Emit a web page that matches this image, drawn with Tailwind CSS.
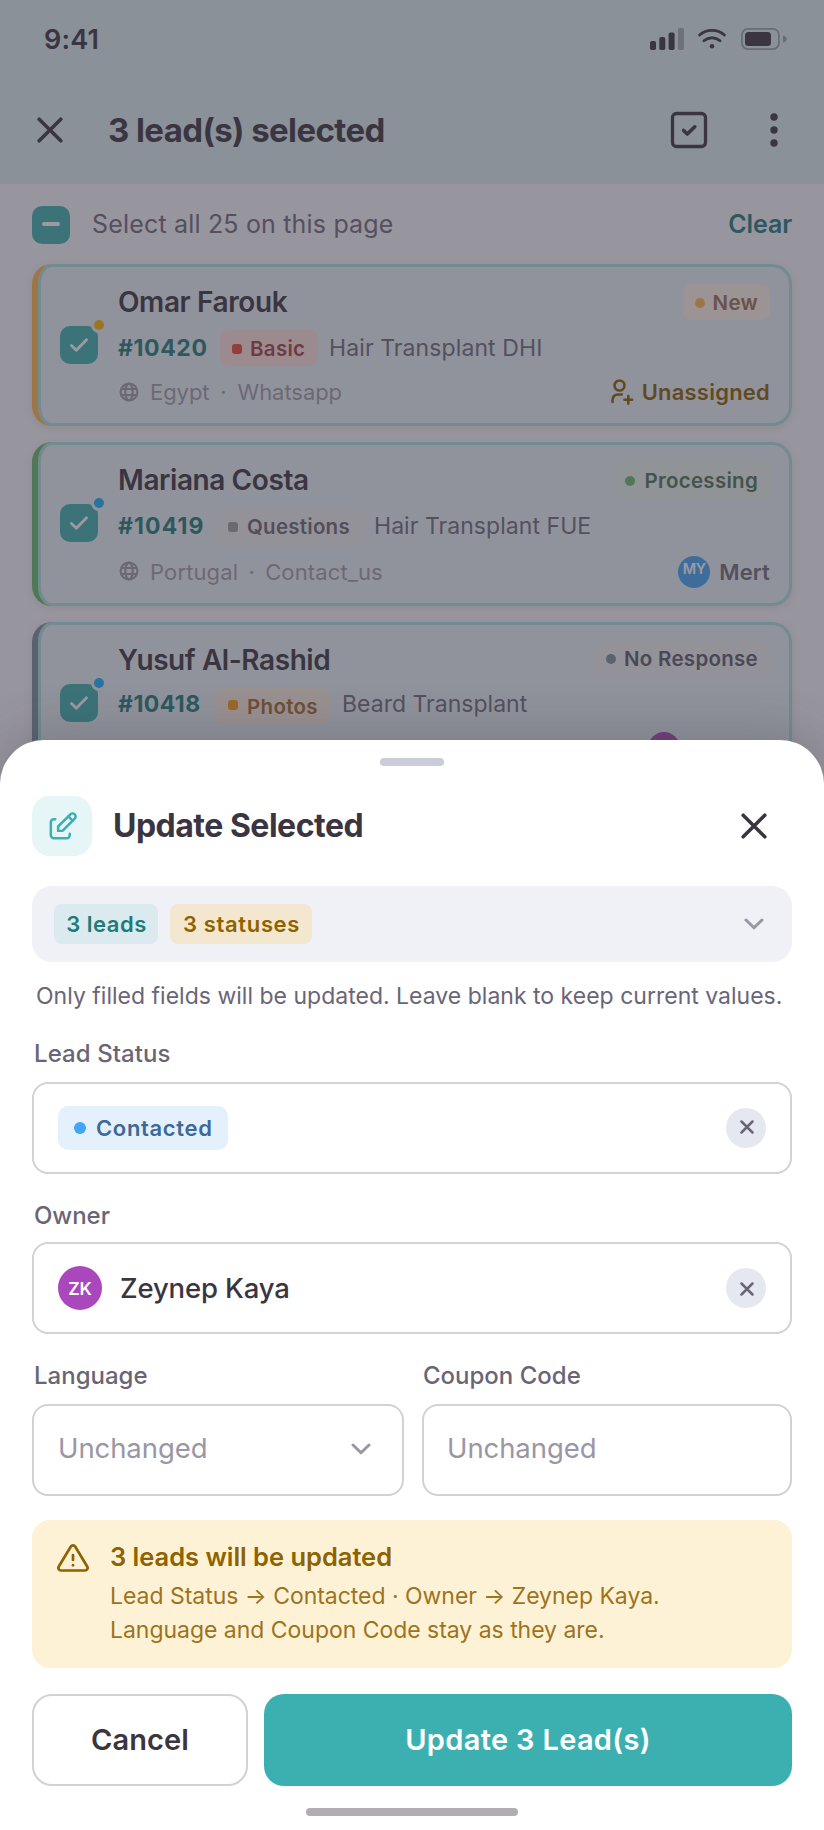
<!DOCTYPE html>
<html lang="en">
<head>
<meta charset="utf-8">
<title>Update Selected Leads</title>
<script src="https://cdn.jsdelivr.net/npm/@tailwindcss/browser@4"></script>
</head>
<body class="bg-[#f5f4fb]">
<svg class="hidden">
  <symbol id="x" viewBox="0 0 26 26"><path d="M2.2 2.2l21.600 21.600M23.800 2.200l-21.600 21.600" fill="none" stroke="currentColor" stroke-width="3.600" stroke-linecap="round"/></symbol>
  <symbol id="x-small" viewBox="0 0 14 14"><path d="M1.500 1.500l11 11M12.500 1.500l-11 11" fill="none" stroke="currentColor" stroke-width="2.500" stroke-linecap="round"/></symbol>
  <symbol id="check" viewBox="0 0 18 14"><path d="M1.500 7.600l4.800 4.700L16.500 1.700" fill="none" stroke="currentColor" stroke-width="2.800" stroke-linecap="round" stroke-linejoin="round"/></symbol>
  <symbol id="chevron" viewBox="0 0 20 12"><path d="M2 2l8 7.800L18 2" fill="none" stroke="currentColor" stroke-width="3" stroke-linecap="round" stroke-linejoin="round"/></symbol>
  <symbol id="globe" viewBox="0 0 20 20"><g fill="none" stroke="currentColor" stroke-width="2.200"><circle cx="10" cy="10" r="8.400"/><ellipse cx="10" cy="10" rx="3.700" ry="8.400"/><path d="M2.200 7h15.600M2.200 13h15.600"/></g></symbol>
</svg>
<div class="relative flex h-[1830px] w-[824px] flex-col overflow-hidden font-['Inter',sans-serif] text-[#3a3541]">

  <!-- App bar -->
  <header class="flex h-[184px] flex-col bg-[#dbedef]">
    <div class="flex h-[78px] items-center justify-between pr-[36px] pl-[44px]">
      <span class="pt-[1px] text-[27px] leading-[30px] font-semibold tracking-[0.15px]">9:41</span>
      <div class="flex items-center gap-[14px]">
        <svg class="h-[22px] w-[34px]" viewBox="0 0 34 22" fill="#3a3541"><rect x="0" y="13" width="6" height="9" rx="1.8"/><rect x="9.3" y="9" width="6" height="13" rx="1.8"/><rect x="18.6" y="4.5" width="6" height="17.5" rx="1.8"/><rect x="28" y="0" width="6" height="22" rx="1.8" opacity=".35"/></svg>
        <svg class="h-[22px] w-[28px]" viewBox="0 0 28 22" fill="none" stroke="#3a3541" stroke-width="2.8" stroke-linecap="round"><path d="M1.6 7C8.4.7 19.6.7 26.4 7M6 12.8c4.5-4 11.5-4 16 0"/><circle cx="14" cy="18.3" r="2.3" fill="#3a3541" stroke="none"/></svg>
        <svg class="ml-[1px] h-[22px] w-[47px]" viewBox="0 0 47 22"><rect x=".9" y=".9" width="37" height="20.2" rx="6" fill="none" stroke="#3a3541" stroke-opacity=".4" stroke-width="1.8"/><rect x="4" y="4" width="26" height="14" rx="3.5" fill="#3a3541"/><path d="M42 7.5c5 1 5 6 0 7z" fill="#3a3541" fill-opacity=".4"/></svg>
      </div>
    </div>
    <div class="flex h-[104px] items-center pr-[45px] pl-[37px]">
      <svg class="size-[26px]"><use href="#x"/></svg>
      <h1 class="ml-[45px] flex-1 text-[33px] leading-[40px] font-bold tracking-[-0.6px]">3 lead(s) selected</h1>
      <svg class="size-[38px]" viewBox="0 0 38 38" fill="none" stroke="#3a3541" stroke-linecap="round" stroke-linejoin="round"><rect x="2.500" y="2.500" width="33" height="33" rx="4" stroke-width="3.300"/><path d="M13.600 19.500l3.700 3.500 7.500-7.200" stroke-width="3.600"/></svg>
      <svg class="ml-[61px] h-[36px] w-[10px]" viewBox="0 0 10 36" fill="#3a3541"><circle cx="5" cy="5" r="3.700"/><circle cx="5" cy="18" r="3.700"/><circle cx="5" cy="31" r="3.700"/></svg>
    </div>
  </header>

  <!-- Lead list -->
  <main class="flex flex-col px-8">
    <div class="flex h-[80px] items-center pt-[2px]">
      <span class="flex size-[38px] items-center justify-center rounded-[10px] bg-[#3cb0b1]"><i class="-mt-[2px] h-[4px] w-[18px] rounded-[2px] bg-white"></i></span>
      <span class="-mt-[3px] ml-[22px] flex-1 text-[25px] leading-[30px] tracking-[0.18px] text-[#6f6a7b]">Select all 25 on this page</span>
      <span class="-mt-[3px] text-[25px] leading-[30px] font-semibold tracking-[-0.1px] text-[#1f7a7a]">Clear</span>
    </div>

    <div class="flex flex-col gap-4">
      <article class="flex h-[162px] gap-5 rounded-[20px] border-l-[6px] border-[#ffb74d] bg-[#e7f1f4] pr-[22px] pl-[22px] shadow-[inset_0_0_0_3px_#aae0df,0_2px_8px_rgba(58,53,65,0.1)]">
        <span class="relative mt-[62px] flex size-[38px] items-center justify-center rounded-[10px] bg-[#3cb0b1] text-white"><svg class="h-[14px] w-[18px]"><use href="#check"/></svg><i class="absolute -top-[9px] -right-[9px] size-[16px] rounded-full border-[3px] border-[#e7f1f4] bg-[#ffb400]"></i></span>
        <div class="flex flex-1 flex-col pt-5">
          <div class="flex h-9 items-center justify-between">
            <h2 class="text-[28px] leading-[34px] font-semibold tracking-[-0.4px]">Omar Farouk</h2>
            <span class="flex h-9 items-center gap-2 rounded-[8px] bg-[#fcf0e6] px-3 pt-[2px] text-[20.500px] font-semibold tracking-[0.28px] text-[#966f55]"><i class="size-[10px] rounded-full bg-[#ffb74d]"></i>New</span>
          </div>
          <div class="mt-[10px] flex h-9 items-center">
            <b class="w-[102px] text-[23px] font-bold tracking-[0.600px] text-[#1f7a7a]">#10420</b>
            <span class="flex h-9 w-[98px] items-center gap-2 rounded-[8px] bg-[#fde1dc] px-3 pt-[2px] text-[20.500px] font-semibold tracking-[0.300px] text-[#a34045]"><i class="size-[10px] shrink-0 rounded-[3px] bg-[#f44336]"></i>Basic</span>
            <span class="ml-[11px] text-[23px] tracking-[0.1px] text-[#6f6a7b]">Hair Transplant DHI</span>
          </div>
          <div class="mt-[8px] flex h-9 items-center text-[22px] tracking-[-0.050px] text-[#a09ba9]">
            <svg class="ml-px size-[20px]"><use href="#globe"/></svg><span class="ml-[11px]">Egypt</span><span class="w-[28px] text-center">·</span><span>Whatsapp</span>
            <svg class="ml-auto h-[26px] w-[24px]" viewBox="0 0 24 26" fill="none" stroke="#8a5d00" stroke-width="2.600" stroke-linecap="round"><circle cx="9.500" cy="6.500" r="5"/><path d="M2.500 23v-1.500c0-4 2.500-6 6-6h3.200M18.300 17v7.600M14.500 20.800h7.600"/></svg>
            <span class="ml-[8px] font-semibold tracking-[0.220px] text-[#8a5d00]">Unassigned</span>
          </div>
        </div>
      </article>

      <article class="flex h-[164px] gap-5 rounded-[20px] border-l-[6px] border-[#66bb6a] bg-[#e7f1f4] pr-[22px] pl-[22px] shadow-[inset_0_0_0_3px_#aae0df,0_2px_8px_rgba(58,53,65,0.1)]">
        <span class="relative mt-[62px] flex size-[38px] items-center justify-center rounded-[10px] bg-[#3cb0b1] text-white"><svg class="h-[14px] w-[18px]"><use href="#check"/></svg><i class="absolute -top-[9px] -right-[9px] size-[16px] rounded-full border-[3px] border-[#e7f1f4] bg-[#16b1ff]"></i></span>
        <div class="flex flex-1 flex-col pt-5">
          <div class="flex h-9 items-center justify-between">
            <h2 class="text-[28px] leading-[34px] font-semibold tracking-[-0.42px]">Mariana Costa</h2>
            <span class="flex h-9 items-center gap-[9px] rounded-[8px] bg-[#e7f2ec] px-3 pt-[2px] text-[20.500px] font-semibold tracking-[0.28px] text-[#4f7158]"><i class="size-[10px] rounded-full bg-[#66bb6a]"></i>Processing</span>
          </div>
          <div class="mt-[10px] flex h-9 items-center">
            <b class="w-[98px] text-[23px] font-bold tracking-[1.100px] text-[#1f7a7a]">#10419</b>
            <span class="mt-[4px] flex h-9 w-[146px] items-center gap-[9px] rounded-[8px] bg-[#eeeff1] px-3 text-[20.500px] font-semibold tracking-[0.250px] text-[#6a6772]"><i class="-mt-[2px] size-[10px] shrink-0 rounded-[3px] bg-[#9e9e9e]"></i><span class="-mt-[1px]">Questions</span></span>
            <span class="ml-[12px] text-[23px] tracking-[0.050px] text-[#6f6a7b]">Hair Transplant FUE</span>
          </div>
          <div class="mt-[10px] flex h-9 items-center text-[22px] tracking-[0.130px] text-[#a09ba9]">
            <svg class="-mt-[2px] ml-px size-[20px]"><use href="#globe"/></svg><span class="ml-[11px]">Portugal</span><span class="w-[27px] text-center">·</span><span>Contact_us</span>
            <span class="ml-auto flex size-8 justify-center rounded-full bg-[#42a5f5] pt-[4px] text-[14.500px] leading-[18px] font-semibold tracking-[-0.500px] text-white">MY</span>
            <span class="ml-[9px] font-semibold tracking-[0.150px] text-[#6f6a7b]">Mert</span>
          </div>
        </div>
      </article>

      <article class="flex h-[162px] gap-5 rounded-[20px] border-l-[6px] border-[#78909c] bg-[#e7f1f4] pr-[22px] pl-[22px] shadow-[inset_0_0_0_3px_#aae0df,0_2px_8px_rgba(58,53,65,0.1)]">
        <span class="relative mt-[62px] flex size-[38px] items-center justify-center rounded-[10px] bg-[#3cb0b1] text-white"><svg class="h-[14px] w-[18px]"><use href="#check"/></svg><i class="absolute -top-[9px] -right-[9px] size-[16px] rounded-full border-[3px] border-[#e7f1f4] bg-[#16b1ff]"></i></span>
        <div class="flex flex-1 flex-col pt-5">
          <div class="flex h-9 items-center justify-between">
            <h2 class="text-[28px] leading-[34px] font-semibold tracking-[-0.430px]">Yusuf Al-Rashid</h2>
            <span class="flex h-9 items-center gap-2 rounded-[8px] bg-[#eceef0] px-3 text-[20.500px] font-semibold tracking-[0.28px] text-[#5b5b6a]"><i class="-mt-[2px] size-[10px] rounded-full bg-[#78909c]"></i><span class="-mt-[1px]">No Response</span></span>
          </div>
          <div class="mt-[8px] flex h-9 items-center">
            <b class="w-[98px] text-[23px] font-bold tracking-[0.450px] text-[#1f7a7a]">#10418</b>
            <span class="mt-[4px] flex h-9 w-[114px] items-center gap-[9px] rounded-[8px] bg-[#f9ebdf] px-3 text-[20.500px] font-semibold tracking-[0.300px] text-[#a3682b]"><i class="-mt-[2px] size-[10px] shrink-0 rounded-[3px] bg-[#fb9a0d]"></i><span class="mt-[2px]">Photos</span></span>
            <span class="ml-[12px] text-[23px] tracking-[0.020px] text-[#6f6a7b]">Beard Transplant</span>
          </div>
          <div class="mt-[8px] flex h-9 items-center text-[22px] tracking-[0.1px] text-[#a09ba9]">
            <svg class="mt-[5px] ml-px size-[20px]"><use href="#globe"/></svg>
            <span class="mr-[90px] ml-auto flex size-8 justify-center rounded-full bg-[#ab47bc]"></span>
          </div>
        </div>
      </article>
    </div>
  </main>

  <!-- Scrim -->
  <div class="absolute inset-0 bg-[rgba(58,53,65,0.5)]"></div>

  <!-- Bottom sheet -->
  <section class="absolute inset-x-0 top-[740px] bottom-0 flex flex-col rounded-t-[44px] bg-white px-8 pt-[18px] shadow-[0_-8px_48px_rgba(58,53,65,0.24)]">
    <div class="h-2 w-16 self-center rounded-full bg-[#cbccd9]"></div>
    <div class="mt-[30px] flex h-[60px] items-center">
      <span class="flex size-[60px] items-center justify-center rounded-[18px] bg-[#e6f5f5]">
        <svg class="ml-[1px] size-[35px]" viewBox="0 0 24 24" fill="none" stroke="#3cb0b1" stroke-width="1.700" stroke-linecap="round" stroke-linejoin="round"><path d="M7 7H6a2 2 0 0 0-2 2v9a2 2 0 0 0 2 2h9a2 2 0 0 0 2-2v-1"/><path d="M20.385 6.585a2.100 2.100 0 0 0-2.970-2.970L9 12v3h3z"/><path d="M16 5l3 3"/></svg>
      </span>
      <h2 class="ml-[21px] flex-1 pb-[1px] text-[32px] leading-[40px] font-bold tracking-[-0.500px]">Update Selected</h2>
      <svg class="mr-[25px] size-[26px]"><use href="#x"/></svg>
    </div>

    <div class="mt-[30px] flex h-[76px] items-center gap-3 rounded-[20px] bg-[#f0f1f7] pr-[28px] pl-[22px] text-[22px] font-semibold">
      <span class="flex h-10 w-[104px] items-center justify-center rounded-[8px] bg-[#daeaee] pl-[1px] tracking-[0.500px] text-[#1f7a7a]">3 leads</span>
      <span class="flex h-10 w-[142px] items-center justify-center rounded-[8px] bg-[#f4e7cf] pl-[1px] tracking-[0.650px] text-[#8f6200]">3 statuses</span>
      <svg class="ml-auto h-[12px] w-[20px] text-[#9a96a5]"><use href="#chevron"/></svg>
    </div>
    <p class="mt-[18px] ml-[4px] text-[23px] leading-[32px] tracking-[0.010px] whitespace-nowrap text-[#6a6576]">Only filled fields will be updated. Leave blank to keep current values.</p>

    <label class="mt-[27px] ml-[2px] text-[24px] leading-[30px] font-medium tracking-[0.080px] text-[#6a6576]">Lead Status</label>
    <div class="mt-[13px] flex h-[92px] items-center rounded-[16px] border-2 border-[#d2d2d4] px-6">
      <span class="flex h-11 w-[170px] items-center gap-[10px] rounded-[10px] bg-[#e4f1fd] pl-4 text-[22px] font-semibold tracking-[0.650px] text-[#3f6897]"><i class="size-3 rounded-full bg-[#42a5f5]"></i>Contacted</span>
      <span class="ml-auto flex size-10 items-center justify-center rounded-full bg-[#e5e8f0] text-[#6a6576]"><svg class="-mt-[2px] ml-[2px] size-[14px]"><use href="#x-small"/></svg></span>
    </div>

    <label class="mt-[27px] ml-[2px] text-[24px] leading-[30px] font-medium tracking-[-0.050px] text-[#6a6576]">Owner</label>
    <div class="mt-[11px] flex h-[92px] items-center rounded-[16px] border-2 border-[#d2d2d4] px-6">
      <span class="flex size-11 items-center justify-center rounded-full bg-[#ab47bc] pt-[2px] text-[17.500px] font-semibold text-white">ZK</span>
      <span class="ml-[18px] pt-[1px] text-[27.500px] font-medium tracking-[-0.150px]">Zeynep Kaya</span>
      <span class="ml-auto flex size-10 items-center justify-center rounded-full bg-[#e5e8f0] text-[#6a6576]"><svg class="mt-[2px] ml-[2px] size-[14px]"><use href="#x-small"/></svg></span>
    </div>

    <div class="mt-[27px] grid grid-cols-[372px_370px] gap-x-[18px]">
      <div class="flex flex-col">
        <label class="ml-[2px] text-[24px] leading-[30px] font-medium text-[#6a6576]">Language</label>
        <div class="mt-[13px] flex h-[92px] items-center justify-between rounded-[16px] border-2 border-[#d2d2d4] pr-[31px] pl-[24px] text-[27.500px] tracking-[-0.080px] text-[#9a96a5]"><span class="-mt-[2px]">Unchanged</span><svg class="-mt-[2px] h-[12px] w-[20px]"><use href="#chevron"/></svg></div>
      </div>
      <div class="flex flex-col">
        <label class="ml-[1px] text-[24px] leading-[30px] font-medium text-[#6a6576]">Coupon Code</label>
        <div class="mt-[13px] flex h-[92px] items-center rounded-[16px] border-2 border-[#d2d2d4] pl-[23px] text-[27.500px] tracking-[-0.080px] text-[#9a96a5]"><span class="-mt-[2px]">Unchanged</span></div>
      </div>
    </div>

    <div class="mt-6 flex h-[148px] rounded-[18px] bg-[#fef2d6] pt-[20px] pl-[25px] text-[#8f6200]">
      <svg class="mt-[4px] h-[28px] w-[32px]" viewBox="0 0 32 28" fill="none" stroke="currentColor" stroke-width="2.700" stroke-linecap="round" stroke-linejoin="round"><path d="M13.700 2.700a2.700 2.700 0 0 1 4.600 0L30.200 22.500a2.600 2.600 0 0 1-2.200 4H4a2.600 2.600 0 0 1-2.200-4z"/><path d="M16 11v5"/><path d="M16 21.200v.1"/></svg>
      <div class="ml-[21px] flex flex-col">
        <strong class="text-[25.500px] leading-[34px] font-semibold tracking-[-0.030px]">3 leads will be updated</strong>
        <p class="mt-[5px] text-[23px] leading-[34px] tracking-[-0.030px] whitespace-nowrap text-[#9d731c]">Lead Status → Contacted · Owner → Zeynep Kaya.<br>Language and Coupon Code stay as they are.</p>
      </div>
    </div>

    <div class="mt-[26px] flex h-[92px] gap-4 text-[29px] font-semibold">
      <button class="w-[216px] rounded-[20px] border-2 border-[#d2d2d4] pb-[1px] tracking-[0.100px]">Cancel</button>
      <button class="flex-1 rounded-[20px] bg-[#3cb0b1] pb-[1px] tracking-[0.320px] text-white">Update 3 Lead(s)</button>
    </div>
    <div class="mt-[22px] h-2 w-[212px] self-center rounded-full bg-[#b0aeb4]"></div>
  </section>
</div>
</body>
</html>
